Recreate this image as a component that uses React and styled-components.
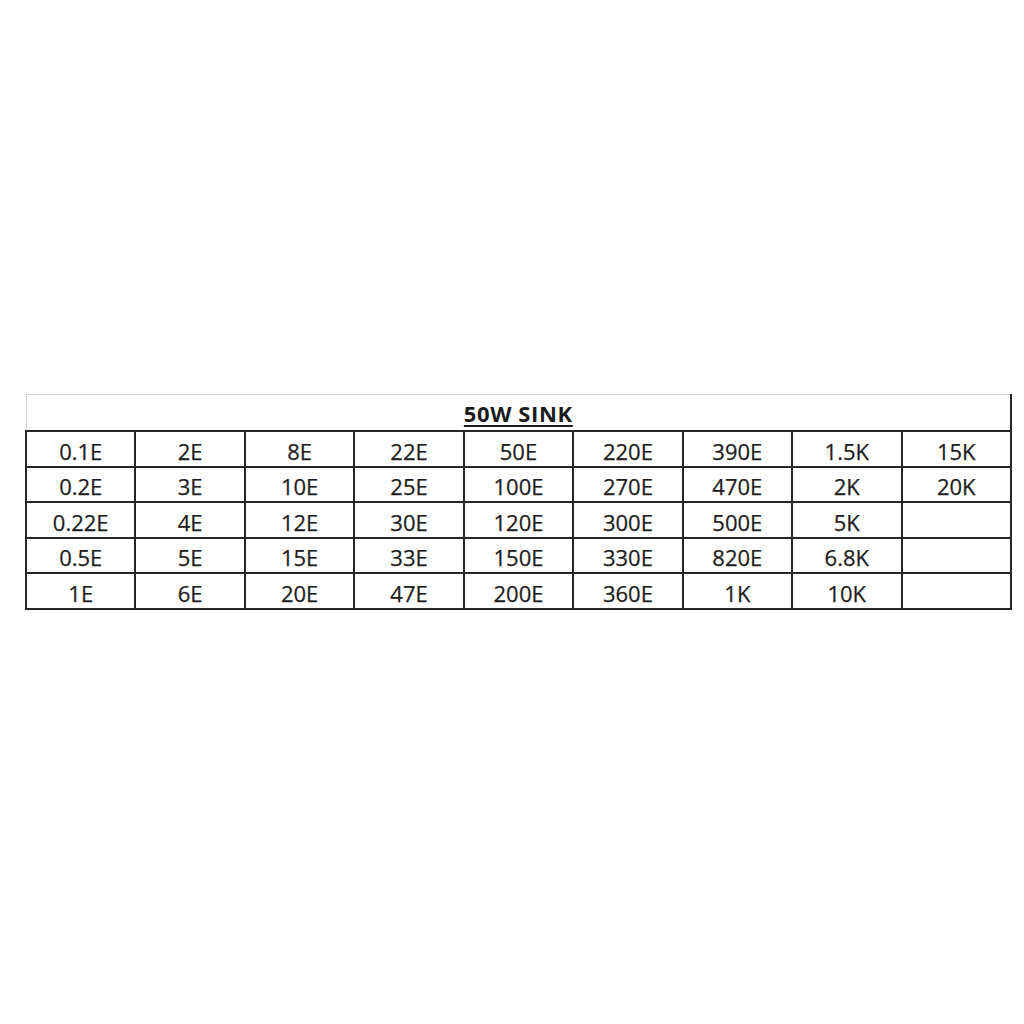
import React from 'react';
import styled, { createGlobalStyle } from 'styled-components';

const GlobalStyle = createGlobalStyle`
  html, body {
    margin: 0;
    padding: 0;
    background: #ffffff;
  }
  body {
    font-family: 'Open Sans', 'Liberation Sans', sans-serif;
    color: #222;
  }
`;

const Page = styled.div`
  width: 1024px;
  height: 1024px;
  box-sizing: border-box;
  padding: 394px 0 0 25px;
  background: #fff;
`;

const SheetTable = styled.table`
  border-collapse: collapse;
  table-layout: fixed;
  width: 987px;
`;

const TitleCell = styled.th`
  height: 35px;
  padding: 0;
  border-top: 1px solid #d4d4d4;
  border-left: 1px solid #d4d4d4;
  border-right: 2px solid #262626;
  border-bottom: 2px solid #262626;
  text-align: center;
  vertical-align: middle;
  font-size: 22px;
  font-weight: 700;
  letter-spacing: 0.6px;
  color: #1c1c1c;
`;

const Title = styled.span`
  text-decoration: underline;
  text-decoration-thickness: 2px;
  text-underline-offset: 3px;
`;

const Row = styled.tr`
  height: ${(p) => (p.$odd ? 35 : 36)}px;
`;

const Cell = styled.td`
  padding: 3px 0 0;
  border: 2px solid #262626;
  text-align: center;
  vertical-align: middle;
  font-size: 22px;
  line-height: 1;
  color: #1e1e1e;
  -webkit-text-stroke: 0.25px #1e1e1e;
  white-space: nowrap;
`;

const rows = [
  ['0.1E', '2E', '8E', '22E', '50E', '220E', '390E', '1.5K', '15K'],
  ['0.2E', '3E', '10E', '25E', '100E', '270E', '470E', '2K', '20K'],
  ['0.22E', '4E', '12E', '30E', '120E', '300E', '500E', '5K', ''],
  ['0.5E', '5E', '15E', '33E', '150E', '330E', '820E', '6.8K', ''],
  ['1E', '6E', '20E', '47E', '200E', '360E', '1K', '10K', ''],
];

export default function App() {
  return (
    <>
      <GlobalStyle />
      <Page>
        <SheetTable>
          <thead>
            <tr>
              <TitleCell colSpan={9}>
                <Title>50W SINK</Title>
              </TitleCell>
            </tr>
          </thead>
          <tbody>
            {rows.map((row, i) => (
              <Row key={i} $odd={i % 2 === 1}>
                {row.map((value, j) => (
                  <Cell key={j}>{value}</Cell>
                ))}
              </Row>
            ))}
          </tbody>
        </SheetTable>
      </Page>
    </>
  );
}
